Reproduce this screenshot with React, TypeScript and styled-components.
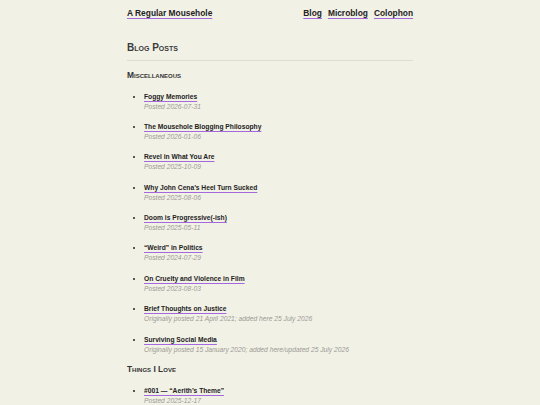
import React from 'react';
import styled, { createGlobalStyle } from 'styled-components';

const GlobalStyle = createGlobalStyle`
  html, body {
    margin: 0;
    padding: 0;
    background: #f2f1e6;
  }
  body {
    font-family: 'Liberation Sans', Arial, sans-serif;
    color: #222;
  }
`;

const Page = styled.div`
  width: 286px;
  margin: 0 auto;
  padding-top: 5px;
`;

const Header = styled.header`
  display: flex;
  justify-content: space-between;
  align-items: center;
  line-height: 16px;
  font-size: 8.4px;
  font-weight: bold;
`;

const Nav = styled.nav`
  display: flex;
  gap: 6px;
`;

const Link = styled.a`
  color: #222;
  font-weight: bold;
  text-decoration: underline;
  text-decoration-color: #a469df;
  text-decoration-thickness: 1.3px;
  text-underline-offset: 1.5px;
  cursor: pointer;
`;

const PageTitle = styled.h2`
  margin: 19px 0 0;
  padding-bottom: 4px;
  border-bottom: 1px solid #deddd2;
  font-size: 10px;
  line-height: 16px;
  font-variant: small-caps;
  font-weight: bold;
  color: #3a3a3a;
`;

const Section = styled.h3<{ $first?: boolean }>`
  margin: ${p => (p.$first ? '8px' : '8.5px')} 0 0;
  font-size: 8.4px;
  line-height: 12px;
  font-variant: small-caps;
  font-weight: bold;
  color: #333;
`;

const List = styled.ul`
  margin: 10.5px 0 0;
  padding-left: 17px;
  list-style: disc;
  font-size: 6.7px;
`;

const Item = styled.li`
  line-height: 10px;
  & + & {
    margin-top: 10.4px;
  }
`;

const Meta = styled.div`
  font-style: italic;
  color: #9a9a94;
`;

type Post = { title: string; meta: string };

const misc: Post[] = [
  { title: 'Foggy Memories', meta: 'Posted 2026-07-31' },
  { title: 'The Mousehole Blogging Philosophy', meta: 'Posted 2026-01-06' },
  { title: 'Revel in What You Are', meta: 'Posted 2025-10-09' },
  { title: 'Why John Cena\u2019s Heel Turn Sucked', meta: 'Posted 2025-08-06' },
  { title: 'Doom is Progressive(-ish)', meta: 'Posted 2025-05-11' },
  { title: '\u201cWeird\u201d in Politics', meta: 'Posted 2024-07-29' },
  { title: 'On Cruelty and Violence in Film', meta: 'Posted 2023-08-03' },
  {
    title: 'Brief Thoughts on Justice',
    meta: 'Originally posted 21 April 2021; added here 25 July 2026',
  },
  {
    title: 'Surviving Social Media',
    meta: 'Originally posted 15 January 2020; added here/updated 25 July 2026',
  },
];

const love: Post[] = [
  { title: '#001 \u2014 \u201cAerith\u2019s Theme\u201d', meta: 'Posted 2025-12-17' },
];

function PostList({ posts }: { posts: Post[] }) {
  return (
    <List>
      {posts.map(p => (
        <Item key={p.title}>
          <Link>{p.title}</Link>
          <Meta>{p.meta}</Meta>
        </Item>
      ))}
    </List>
  );
}

export default function App() {
  return (
    <>
      <GlobalStyle />
      <Page>
        <Header>
          <Link>A Regular Mousehole</Link>
          <Nav>
            <Link>Blog</Link>
            <Link>Microblog</Link>
            <Link>Colophon</Link>
          </Nav>
        </Header>
        <PageTitle>Blog Posts</PageTitle>
        <Section $first>Miscellaneous</Section>
        <PostList posts={misc} />
        <Section>Things I Love</Section>
        <PostList posts={love} />
      </Page>
    </>
  );
}
